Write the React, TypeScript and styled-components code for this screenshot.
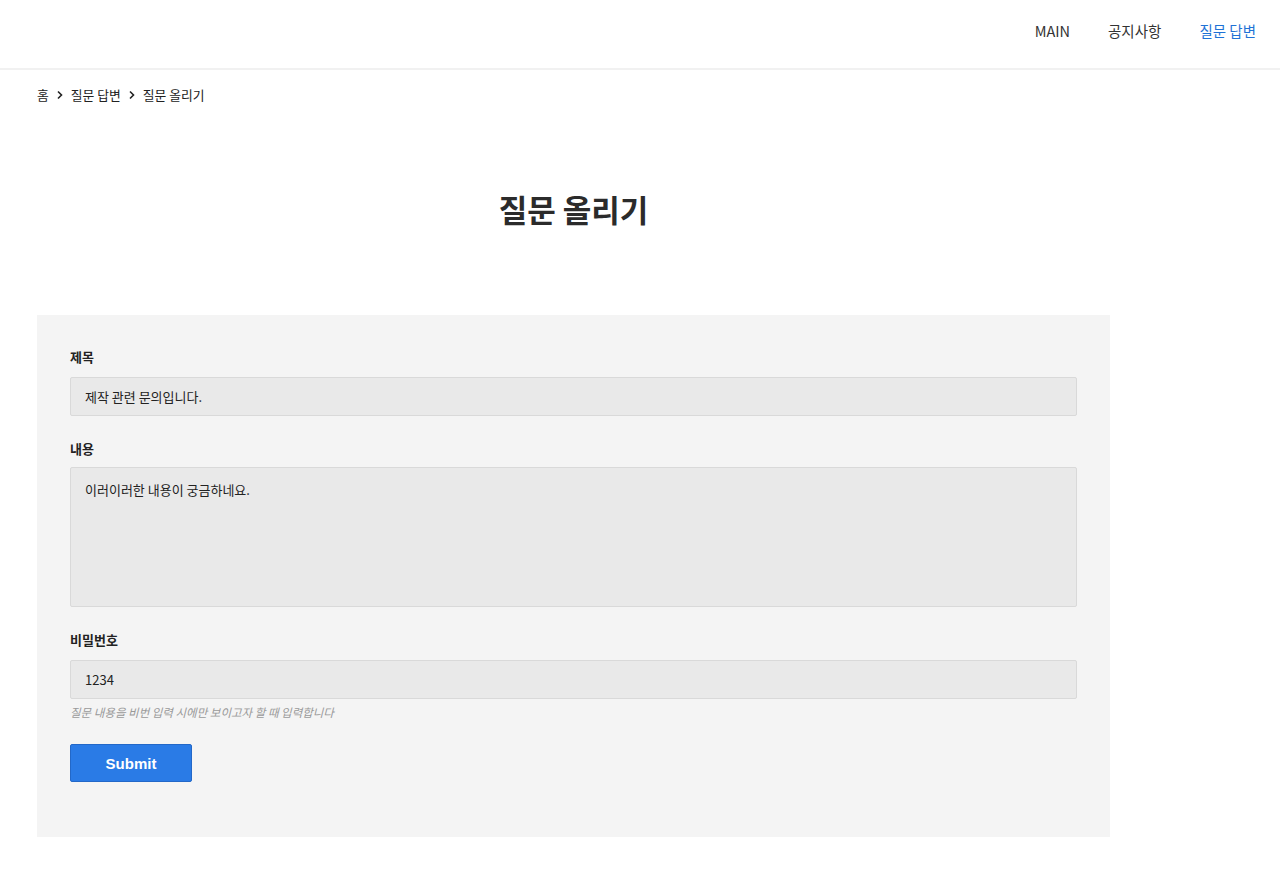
import React from "react";
import styled, { createGlobalStyle } from "styled-components";

const GlobalStyle = createGlobalStyle`
  html, body { margin: 0; padding: 0; background: #ffffff; }
  body {
    font-family: "Noto Sans", "Noto Sans CJK KR", sans-serif;
    color: #222;
  }
  * { box-sizing: border-box; }
`;

const Header = styled.header`
  height: 70px;
  border-bottom: 2px solid #f1f1f1;
  display: flex;
  align-items: center;
  justify-content: flex-end;
  padding-right: 24px;
`;

const Nav = styled.nav`
  display: flex;
  gap: 38px;
  align-items: center;
  margin-top: -7px;
`;

const NavLink = styled.a<{ $active?: boolean }>`
  font-family: "Noto Sans CJK KR", "Noto Sans", sans-serif;
  font-size: 14.5px;
  color: ${(p) => (p.$active ? "#1f72d6" : "#333")};
  text-decoration: none;
  cursor: pointer;
`;

const Container = styled.main`
  width: 1073px;
  margin-left: 37px;
`;

const Breadcrumb = styled.div`
  display: flex;
  align-items: center;
  gap: 7px;
  height: 50px;
  font-family: "Noto Sans CJK KR", sans-serif;
  font-size: 12.8px;
  color: #222;
  padding-bottom: 1px;
`;

const Crumb = styled.span``;

const Chevron = styled.svg`
  width: 8px;
  height: 10px;
`;

const Title = styled.h1`
  margin: 0;
  text-align: center;
  font-family: "Noto Sans CJK KR", sans-serif;
  font-size: 31px;
  font-weight: 700;
  color: #2b2b2b;
  padding-top: 64px;
  height: 195px;
  line-height: 50px;
`;

const Panel = styled.form`
  background: #f4f4f4;
  padding: 32px 33px 55px;
  display: flex;
  flex-direction: column;
`;

const Field = styled.div<{ $gap?: number }>`
  display: flex;
  flex-direction: column;
  margin-bottom: 21px;
`;

const Label = styled.label<{ $tight?: boolean }>`
  font-family: "Noto Sans CJK KR", sans-serif;
  font-size: 13px;
  font-weight: 700;
  color: #222;
  line-height: 20px;
  margin-top: ${(p) => (p.$tight ? "2px" : "0")};
  margin-bottom: ${(p) => (p.$tight ? "8px" : "10px")};
`;

const Input = styled.input`
  height: 39px;
  width: 100%;
  background: #e9e9e9;
  border: 1px solid #d9d9d9;
  border-radius: 2px;
  padding: 0 14px;
  font-family: "Noto Sans CJK KR", sans-serif;
  font-size: 13px;
  color: #222;
  outline: none;
`;

const TextArea = styled.textarea`
  height: 140px;
  width: 100%;
  background: #e9e9e9;
  border: 1px solid #d9d9d9;
  border-radius: 2px;
  padding: 12px 14px;
  margin-bottom: 2px;
  font-family: "Noto Sans CJK KR", sans-serif;
  font-size: 13px;
  color: #222;
  resize: none;
  outline: none;
  line-height: 20px;
`;

const Help = styled.small`
  font-family: "Noto Sans CJK KR", sans-serif;
  font-size: 11.5px;
  font-style: italic;
  color: #999;
  margin-top: 5px;
  line-height: 16px;
`;

const SubmitButton = styled.button`
  width: 122px;
  height: 38px;
  background: #2a7be6;
  border: 1px solid #2368c8;
  border-radius: 2px;
  color: #fff;
  font-family: "Liberation Sans", Arial, sans-serif;
  font-size: 15px;
  font-weight: 700;
  cursor: pointer;
  margin-top: 3px;
`;

const ChevronIcon = () => (
  <Chevron viewBox="0 0 8 10">
    <path d="M2 1.5 L5.5 5 L2 8.5" fill="none" stroke="#222" strokeWidth="1.6" />
  </Chevron>
);

export default function App() {
  return (
    <>
      <GlobalStyle />
      <Header>
        <Nav>
          <NavLink>MAIN</NavLink>
          <NavLink>공지사항</NavLink>
          <NavLink $active>질문 답변</NavLink>
        </Nav>
      </Header>
      <Container>
        <Breadcrumb>
          <Crumb>홈</Crumb>
          <ChevronIcon />
          <Crumb>질문 답변</Crumb>
          <ChevronIcon />
          <Crumb>질문 올리기</Crumb>
        </Breadcrumb>
        <Title>질문 올리기</Title>
        <Panel onSubmit={(e) => e.preventDefault()}>
          <Field>
            <Label>제목</Label>
            <Input defaultValue="제작 관련 문의입니다." />
          </Field>
          <Field>
            <Label $tight>내용</Label>
            <TextArea defaultValue="이러이러한 내용이 궁금하네요." />
          </Field>
          <Field>
            <Label>비밀번호</Label>
            <Input defaultValue="1234" />
            <Help>질문 내용을 비번 입력 시에만 보이고자 할 때 입력합니다</Help>
          </Field>
          <div>
            <SubmitButton type="submit">Submit</SubmitButton>
          </div>
        </Panel>
      </Container>
    </>
  );
}
